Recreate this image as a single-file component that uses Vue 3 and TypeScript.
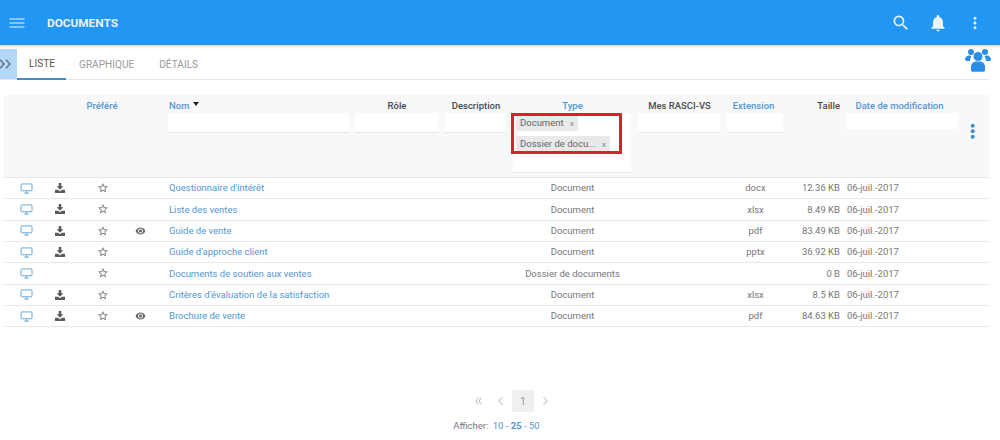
<script setup lang="ts">
interface Row {
  name: string
  type: string
  ext: string
  size: string
  download: boolean
  eye: boolean
}

const rows: Row[] = [
  { name: "Questionnaire d'intérêt", type: 'Document', ext: 'docx', size: '12.36 KB', download: true, eye: false },
  { name: 'Liste des ventes', type: 'Document', ext: 'xlsx', size: '8.49 KB', download: true, eye: false },
  { name: 'Guide de vente', type: 'Document', ext: 'pdf', size: '83.49 KB', download: true, eye: true },
  { name: "Guide d'approche client", type: 'Document', ext: 'pptx', size: '36.92 KB', download: true, eye: false },
  { name: 'Documents de soutien aux ventes', type: 'Dossier de documents', ext: '', size: '0 B', download: false, eye: false },
  { name: "Critères d'évaluation de la satisfaction", type: 'Document', ext: 'xlsx', size: '8.5 KB', download: true, eye: false },
  { name: 'Brochure de vente', type: 'Document', ext: 'pdf', size: '84.63 KB', download: true, eye: true },
]
</script>

<template>
  <div class="page">
    <header class="topbar">
      <svg class="menu" viewBox="0 0 24 24" width="20" height="20"><path d="M3 17.500h18v-1.300H3zm0-4.850h18v-1.300H3zM3 6.500v1.300h18V6.500z" /></svg>
      <span class="title">DOCUMENTS</span>
      <span class="spacer"></span>
      <svg class="top-icon" viewBox="0 0 24 24" width="20" height="20"><path d="M15.5 14h-.79l-.28-.27A6.47 6.47 0 0 0 16 9.5 6.5 6.5 0 1 0 9.5 16c1.61 0 3.09-.59 4.23-1.57l.27.28v.79l5 4.99L20.49 19l-4.99-5zm-6 0C7.01 14 5 11.99 5 9.5S7.01 5 9.5 5 14 7.01 14 9.5 11.99 14 9.5 14z" /></svg>
      <svg class="top-icon" viewBox="0 0 24 24" width="20" height="20"><path d="M12 22c1.1 0 2-.9 2-2h-4c0 1.1.9 2 2 2zm6-6v-5c0-3.07-1.63-5.64-4.5-6.32V4c0-.83-.67-1.5-1.5-1.5s-1.5.67-1.5 1.5v.68C7.64 5.36 6 7.92 6 11v5l-2 2v1h16v-1l-2-2z" /></svg>
      <svg class="top-icon" viewBox="0 0 24 24" width="20" height="20"><path d="M12 8c1.100 0 1.800-.9 1.800-1.800S13.100 4.400 12 4.400s-1.800.9-1.800 1.800S10.900 8 12 8zm0 2.200c-1.100 0-1.800.8-1.800 1.800s.7 1.800 1.800 1.800 1.800-.8 1.800-1.800-.7-1.800-1.800-1.800zm0 5.800c-1.100 0-1.800.8-1.800 1.800s.7 1.800 1.800 1.800 1.800-.8 1.800-1.800-.7-1.800-1.800-1.800z" /></svg>
    </header>

    <nav class="tabs">
      <div class="toggle">
        <svg viewBox="0 0 12 10" width="12" height="10"><path d="M0 .8l4 4.200-4 4.200M6 .8l4 4.200-4 4.200" fill="none" stroke="#5f6b76" stroke-width="1.300" /></svg>
      </div>
      <span class="tab active">LISTE</span>
      <span class="tab graph">GRAPHIQUE</span>
      <span class="tab details">DÉTAILS</span>
      <span class="spacer"></span>
      <svg class="people" viewBox="0 0 26 26" width="26" height="26">
        <circle cx="6" cy="4" r="3" /><circle cx="20" cy="4" r="3" />
        <path d="M0 12c0-3 2-4.500 4-4.500 1 0 2 .4 2.500 1-.9 1-1.400 2.300-1.400 3.800v.7H2c-1 0-2-.6-2-2zM26 12c0-3-2-4.500-4-4.500-1 0-2 .4-2.500 1 .9 1 1.400 2.300 1.400 3.800v.7H24c1 0 2-.6 2-2z" />
        <circle cx="13" cy="8.500" r="4.500" />
        <path d="M6 19c0-4 3-5.500 5-5.500h4c2 0 5 1.500 5 5.500v3c0 1-.8 1.800-1.800 1.800H7.800c-1 0-1.800-.8-1.800-1.800z" />
      </svg>
    </nav>

    <section class="table">
      <div class="thead grid">
        <div></div>
        <div></div>
        <div class="hc link">Préféré</div>
        <div></div>
        <div class="hn">
          <div class="hl link">Nom <span class="caret"></span></div>
          <div class="filter flush"></div>
        </div>
        <div class="hc dark">Rôle<div class="filter"></div></div>
        <div class="hc dark">Description<div class="filter"></div></div>
        <div class="hc link type-head">
          Type
          <div class="filter type-filter">
            <span class="tag">Document <i>x</i></span>
            <span class="tag">Dossier de docu... <i>x</i></span>
          </div>
          <div class="highlight"></div>
        </div>
        <div class="hc dark">Mes RASCI-VS<div class="filter"></div></div>
        <div class="hc link ext-head">Extension<div class="filter"></div></div>
        <div class="hr dark">Taille</div>
        <div class="hc link date-head">Date de modification<div class="filter plain"></div></div>
        <div class="kebab">
          <svg viewBox="0 0 6 18" width="5.500" height="16.500"><circle cx="3" cy="3" r="2.200" /><circle cx="3" cy="9" r="2.200" /><circle cx="3" cy="15" r="2.200" /></svg>
        </div>
      </div>

      <div v-for="row in rows" :key="row.name" class="row grid">
        <div class="ic">
          <svg viewBox="0 0 14 12" width="13" height="11" fill="none" stroke="#5a9fd6"><rect x="1" y="1" width="12" height="7.500" rx="1" /><path d="M4.500 11h5M7 9v2" /></svg>
        </div>
        <div class="ic">
          <svg v-if="row.download" viewBox="0 0 12 12" width="10" height="10" fill="#5a5a5a"><path d="M4.500 0h3v4H10L6 8 2 4h2.500zM0 8h3.500L6 10l2.500-2H12v4H0z" /></svg>
        </div>
        <div class="ic star">
          <svg viewBox="0 0 24 24" width="12" height="12" fill="#777"><path d="M22 9.240l-7.190-.62L12 2 9.190 8.630 2 9.240l5.460 4.730L5.820 21 12 17.270 18.180 21l-1.630-7.030L22 9.240zM12 15.400l-3.760 2.270 1-4.280-3.320-2.880 4.380-.38L12 6.100l1.710 4.040 4.380.38-3.320 2.880 1 4.280L12 15.400z" /></svg>
        </div>
        <div class="ic">
          <svg v-if="row.eye" viewBox="0 0 24 18" width="11" height="8" fill="#666"><path d="M12 1C7 1 2.700 4 1 9c1.700 5 6 8 11 8s9.300-3 11-8c-1.700-5-6-8-11-8zm0 13.500c-3 0-5.500-2.400-5.500-5.500S9 3.500 12 3.500s5.500 2.400 5.500 5.500-2.500 5.500-5.500 5.500zM12 5.500c-2 0-3.500 1.500-3.500 3.500s1.500 3.500 3.500 3.500 3.500-1.500 3.500-3.500-1.500-3.500-3.500-3.500z" /></svg>
        </div>
        <div class="name">{{ row.name }}</div>
        <div></div>
        <div></div>
        <div class="center">{{ row.type }}</div>
        <div></div>
        <div class="center">{{ row.ext }}</div>
        <div class="right">{{ row.size }}</div>
        <div class="date">06-juil.-2017</div>
        <div></div>
      </div>
    </section>

    <footer class="pager">
      <div class="pages">
        <span class="pg">
          <svg viewBox="0 0 10 10" width="10" height="10" fill="none" stroke="#b8b8b8"><path d="M4.500 1.500L2 5l2.500 3.500M7.500 1.500L5 5l2.500 3.500" /></svg>
        </span>
        <span class="pg">
          <svg viewBox="0 0 10 10" width="10" height="10" fill="none" stroke="#b8b8b8"><path d="M6.500 1L3 5l3.500 4" /></svg>
        </span>
        <span class="pg current">1</span>
        <span class="pg">
          <svg viewBox="0 0 10 10" width="10" height="10" fill="none" stroke="#b8b8b8"><path d="M3.500 1L7 5 3.500 9" /></svg>
        </span>
      </div>
      <div class="show">Afficher: <span class="opts">10 - <b>25</b> - 50</span></div>
    </footer>
  </div>
</template>

<style>
html, body { margin: 0; background: #fff; }
</style>

<style scoped>
.page {
  width: 1000px;
  height: 440px;
  overflow: hidden;
  position: relative;
  font-family: Roboto, "Liberation Sans", sans-serif;
  font-size: 9.500px;
  color: #777;
  background: #fff;
}
.spacer { flex: 1; }
.topbar {
  height: 45px;
  display: flex;
  align-items: center;
  background: #2196f3;
  box-shadow: 0 1px 2px rgba(0, 0, 0, 0.2);
  padding: 0 15px 0 7px;
  box-sizing: border-box;
  color: #fff;
}
.topbar svg { fill: #eaf4fd; }
.menu { margin-right: 20px; }
.title { font-size: 11.800px; font-weight: 700; color: #e8f3fd; }
.top-icon { margin-left: 17px; }
.tabs {
  margin-top: 4px;
  height: 30px;
  width: 989px;
  display: flex;
  align-items: stretch;
  border-bottom: 1px solid #e4e4e4;
}
.toggle {
  width: 17px;
  background: #b3d7f6;
  display: flex;
  align-items: center;
  justify-content: flex-start;
}
.tab {
  display: flex;
  align-items: center;
  font-size: 10.100px;
  color: #9a9a9a;
}
.tab.active {
  color: #555;
  padding: 0 12px;
  width: 25px;
  border-bottom: 2px solid #3f8fcf;
  margin-bottom: -1px;
}
.tab.graph { margin-left: 13px; }
.tab.details { margin-left: 25px; }
.people { fill: #2b8ee6; margin-top: -1px; margin-right: -2px; }
.table { margin: 15px 0 0 4px; width: 985px; }
.grid {
  display: grid;
  grid-template-columns: 44px 24px 60px 16px 204px 90px 68px 125px 89px 63px 57px 118px 27px;
}
.thead {
  height: 83px;
  box-sizing: border-box;
  padding-top: 4px;
  background: #f8f8f8;
  border-bottom: 1px solid #e6e6e6;
  font-weight: 500;
  line-height: 13px;
}
.link { color: #5297d3; }
.dark { color: #4a4a4a; }
.hc { text-align: center; }
.hr { text-align: right; padding-right: 4px; }
.hn { padding-left: 21px; padding-right: 3px; }
.caret {
  display: inline-block;
  border: 3px solid transparent;
  border-top: 4px solid #222;
  border-bottom: 0;
  vertical-align: 3px;
  margin-left: 1px;
}
.filter {
  height: 19px;
  margin: 1px 4px 0 3px;
  background: #fff;
  border-bottom: 1px solid #e8e8e8;
}
.filter.flush { margin: 1px 0 0 -1px; }
.filter.plain { border-bottom: 0; margin: 1px -3px 0 3px; height: 16px; }
.ext-head { padding-right: 4px; }
.ext-head .filter { margin-right: 0; }
.date-head { padding-right: 7px; }
.type-head { position: relative; }
.type-filter {
  height: 60px;
  margin: 1px 4px 0 3px;
  box-sizing: border-box;
  padding: 2px 0 0 3px;
  text-align: left;
  font-weight: 400;
  display: flex;
  flex-direction: column;
  align-items: flex-start;
  gap: 5px;
  line-height: 1;
}
.tag {
  background: #e9e9e9;
  color: #666;
  height: 16px;
  line-height: 15px;
  padding: 0 4px;
  border-radius: 2px;
  white-space: nowrap;
}
.tag i { font-style: normal; font-size: 8px; margin-left: 4px; color: #888; }
.highlight {
  position: absolute;
  left: 1px;
  top: 14px;
  width: 105px;
  height: 35px;
  border: 3px solid #d8202e;
  pointer-events: none;
}
.kebab { display: flex; align-items: flex-start; padding-top: 24px; padding-left: 8px; }
.kebab svg { fill: #3f8fcf; }
.row {
  height: 21.330px;
  align-items: center;
  border-bottom: 1px solid #e6e6e6;
  box-sizing: border-box;
  line-height: 1;
}
.ic { display: flex; justify-content: center; align-items: center; }
.ic.star { padding-left: 1px; }
.name { padding-left: 21px; color: #5297d3; white-space: nowrap; }
.center { text-align: center; white-space: nowrap; }
.right { text-align: right; padding-right: 4px; white-space: nowrap; }
.date { padding-left: 3px; white-space: nowrap; }
.pager {
  position: absolute;
  left: 0;
  right: 0;
  top: 390px;
  text-align: center;
}
.pages {
  display: flex;
  justify-content: center;
  align-items: center;
  height: 22px;
  margin-left: 24px;
}
.pg {
  width: 22px;
  height: 22px;
  display: flex;
  align-items: center;
  justify-content: center;
}
.pg.current { background: #f0f0f0; color: #999; font-size: 10.500px; }
.show { margin-top: 8px; margin-left: -7px; color: #777; }
.opts { color: #5297d3; margin-left: 2px; }
.opts b { font-weight: 700; }
</style>
